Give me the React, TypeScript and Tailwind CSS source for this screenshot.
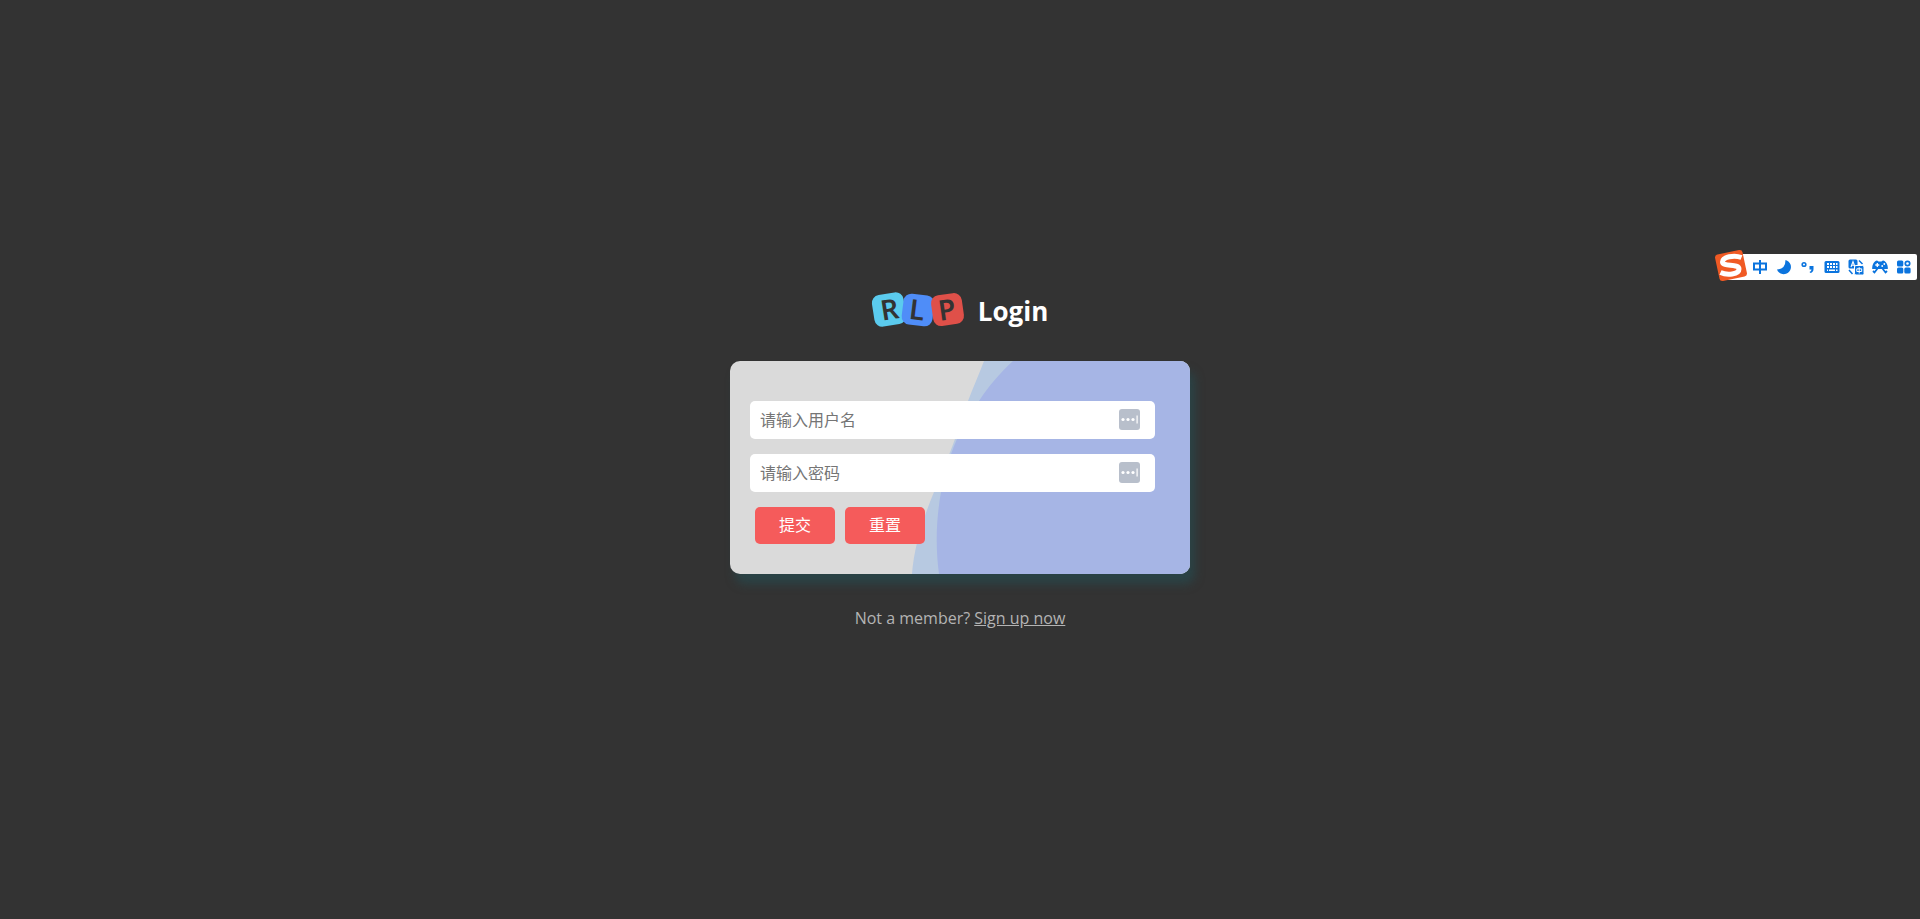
import React from "react";

const barIcon = "h-4 w-4 shrink-0";

function Logo() {
  return (
    <svg viewBox="0 -8 94 54" className="-my-2 h-[54px] w-[94px] overflow-visible" role="img" aria-label="RLP">
      <g fontFamily="Noto Sans, sans-serif" fontWeight="600" fontSize="28" fill="#333" textAnchor="middle">
        <g transform="rotate(-9 17 18.500)">
          <rect x="1" y="2.500" width="32" height="32" rx="8" fill="#5bcbee" />
          <text x="17.500" y="28.500">R</text>
        </g>
        <g transform="rotate(7 46 19)">
          <rect x="30.500" y="3.500" width="31" height="31" rx="8" fill="#4f8df8" />
          <text x="45" y="29">L</text>
        </g>
        <g transform="rotate(-8 76 18.500)">
          <rect x="60" y="3" width="31" height="31" rx="8" fill="#df5049" />
          <text x="75" y="28.500">P</text>
        </g>
      </g>
    </svg>
  );
}

function FillIcon() {
  return (
    <svg viewBox="0 0 21 21" className="h-[21px] w-[21px]" aria-hidden="true">
      <rect width="21" height="21" rx="3" fill="#b8bfcb" />
      <g fill="#fff">
        <circle cx="4" cy="10.500" r="1.600" />
        <circle cx="9" cy="10.500" r="1.600" />
        <circle cx="14" cy="10.500" r="1.600" />
        <rect x="17.500" y="6.500" width="1.200" height="8" />
      </g>
    </svg>
  );
}

function Field({ label, type }: { label: string; type: string }) {
  return (
    <div className="flex h-[38px] items-center rounded-[5px] bg-white pl-[10px] pr-[15px]">
      <input
        type={type}
        aria-label={label}
        placeholder={label}
        className="h-full min-w-0 flex-1 bg-transparent text-base text-black outline-none placeholder:text-[#757575]"
      />
      <FillIcon />
    </div>
  );
}

function Backdrop() {
  return (
    <svg viewBox="0 0 460 213" preserveAspectRatio="none" className="absolute inset-0 h-full w-full" aria-hidden="true">
      <path d="M254 0C249 13 243 27 238 40C233 53 229 67 225 78C218 97 210 117 204 131C192 160 184 187 182 213H460V0Z" fill="#b7c9e1" />
      <path d="M283 0C270 12 258 26 249 40C239 53 233 64 227 78C212 112 202 161 209 213H460V0Z" fill="#a6b5e5" />
    </svg>
  );
}

function InputBar() {
  return (
    <div className="absolute right-[3px] top-[249px] flex items-center" role="toolbar" aria-label="输入法">
      <svg viewBox="0 0 34 34" className="relative z-10 -mr-7 h-[34px] w-[34px]" aria-hidden="true">
        <rect x="3" y="3" width="28" height="27" rx="3" fill="#f05a24" transform="rotate(-12 17 16.500)" />
        <path
          d="M27.500 8.500C20 5.500 8.500 8 8.500 13C8.500 18 25 14.500 25 20C25 25.500 13 26.500 6.500 23.500"
          fill="none"
          stroke="#fff"
          strokeWidth="5"
        />
      </svg>
      <div className="mt-[2px] flex h-[26px] items-center gap-2 rounded-[2px] bg-white pl-[32px] pr-[5px] text-[#0b74de]">
        <svg viewBox="0 0 16 16" className={barIcon} fill="none" stroke="currentColor" strokeWidth="2">
          <path d="M2 4.500H14V10.500H2ZM8 1V15" />
        </svg>
        <svg viewBox="0 0 16 16" className={barIcon} fill="currentColor">
          <path d="M9.500 1A7.200 7.200 0 1 1 1 10.500Q9.500 10 9.500 1Z" />
        </svg>
        <svg viewBox="0 0 16 16" className={barIcon} fill="currentColor">
          <circle cx="4" cy="5.500" r="1.800" fill="none" stroke="currentColor" strokeWidth="1.600" />
          <path d="M9.500 7H13.500V10Q13.500 13 10.500 14L9.500 13Q11.500 12 11.500 10.500H9.500Z" />
        </svg>
        <svg viewBox="0 0 16 16" className={barIcon} fill="currentColor">
          <rect x="0.500" y="2" width="15" height="12" rx="1.500" />
          <g fill="#fff">
            <path d="M3 4H5V6H3ZM6 4H8V6H6ZM9 4H11V6H9ZM12 4H13.500V6H12Z" />
            <path d="M3 7H5V9H3ZM6 7H8V9H6ZM9 7H11V9H9ZM12 7H13.500V9H12Z" />
            <path d="M3 10.500H4V12H3ZM5 10.500H11V12H5ZM12 10.500H13.500V12H12Z" />
          </g>
        </svg>
        <svg viewBox="0 0 16 16" className={barIcon} fill="none" stroke="currentColor" strokeWidth="1.500">
          <rect x="0.500" y="0.500" width="9" height="9" rx="1.500" fill="currentColor" stroke="none" />
          <path d="M3 8L5 2.500L7 8M3.500 6.200H6.500" stroke="#fff" strokeWidth="1.100" />
          <path d="M11 1.500L14.500 5M1 11L4.500 15" />
          <rect x="6.500" y="6.500" width="9.500" height="9.500" rx="1.500" fill="currentColor" stroke="#fff" strokeWidth="1" />
          <path d="M8.800 9.800H13.700V12.500H8.800ZM11.200 8.200V14.500" stroke="#fff" strokeWidth="1" />
        </svg>
        <svg viewBox="0 0 16 16" className={barIcon} fill="currentColor">
          <path d="M3.500 2Q5 1 6.500 2.500H9.500Q11 1 12.500 2Q15.500 4 15.800 8.500V10H0.200V8.500Q.5 4 3.500 2Z" />
          <path d="M3.300 6H7.300M5.300 4V8" fill="none" stroke="#fff" strokeWidth="1.300" />
          <circle cx="10.200" cy="7" r=".9" fill="#fff" />
          <circle cx="12.300" cy="5" r=".9" fill="#fff" />
          <path d="M5.500 9.500L2.500 13.500L1 12M10.500 9.500L13.500 13.500L15 12" fill="none" stroke="currentColor" strokeWidth="1.800" />
        </svg>
        <svg viewBox="0 0 16 16" className={barIcon} fill="currentColor">
          <rect x="1" y="1.500" width="6.300" height="6" rx="1.500" />
          <rect x="1" y="8.500" width="6.300" height="6" rx="1.500" />
          <rect x="8.300" y="8.500" width="6.300" height="6" rx="1.500" />
          <circle cx="11.500" cy="4.500" r="2.200" fill="none" stroke="currentColor" strokeWidth="1.700" />
        </svg>
      </div>
    </div>
  );
}

export default function App() {
  return (
    <div className="relative flex min-h-screen flex-col items-center justify-center bg-[#333] font-['Open_Sans','Noto_Sans_CJK_SC',sans-serif]">
      <main className="flex flex-col items-center">
        <h1 className="flex items-center gap-3 text-[26px] leading-[38px] font-bold text-white">
          <Logo />
          <span className="pt-[2px]">Login</span>
        </h1>
        <form
          className="relative mt-[31px] w-[460px] max-w-full overflow-hidden rounded-[10px] bg-[#dadada] pb-[30px] pl-5 pr-[35px] pt-10 shadow-[5px_10px_10px_rgba(37,79,83,0.6)]"
          onSubmit={(e) => e.preventDefault()}
        >
          <Backdrop />
          <div className="relative flex flex-col gap-[15px]">
            <Field label="请输入用户名" type="text" />
            <Field label="请输入密码" type="password" />
            <div className="flex gap-[10px] pl-[5px]">
              <button type="submit" className="h-[37px] w-20 rounded-[5px] bg-[#f55b5b] text-base text-white">提交</button>
              <button type="reset" className="h-[37px] w-20 rounded-[5px] bg-[#f55b5b] text-base text-white">重置</button>
            </div>
          </div>
        </form>
        <p className="mt-8 text-base text-[#b4b4b4]">
          Not a member? <a href="#signup" className="underline">Sign up now</a>
        </p>
      </main>
      <InputBar />
    </div>
  );
}
